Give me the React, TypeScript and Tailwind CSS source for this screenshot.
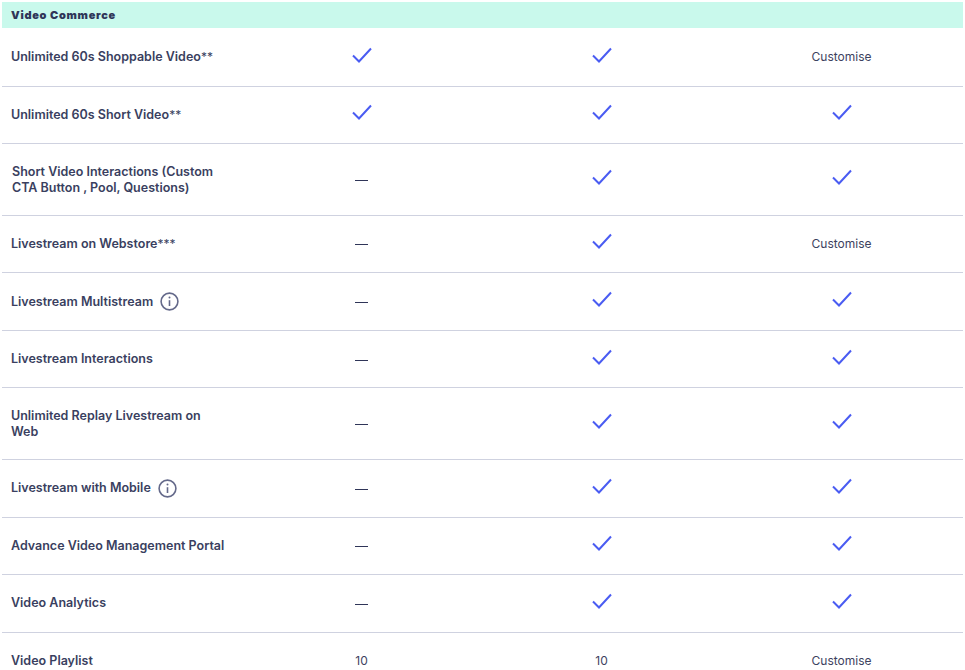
const font = "font-['Inter','Liberation_Sans',sans-serif]";

type Cell = 'check' | 'dash' | string;

const rows: { label: string; stars?: string; cells: Cell[]; tall?: boolean; info?: boolean; nudge?: boolean }[] = [
  { label: 'Unlimited 60s Shoppable Video', stars: '**', cells: ['check', 'check', 'Customise'] },
  { label: 'Unlimited 60s Short Video', stars: '**', cells: ['check', 'check', 'check'] },
  { label: 'Short Video Interactions (Custom CTA Button , Pool, Questions)', cells: ['dash', 'check', 'check'], tall: true, nudge: true },
  { label: 'Livestream on Webstore', stars: '***', cells: ['dash', 'check', 'Customise'] },
  { label: 'Livestream Multistream', cells: ['dash', 'check', 'check'], info: true },
  { label: 'Livestream Interactions', cells: ['dash', 'check', 'check'] },
  { label: 'Unlimited Replay Livestream on Web', cells: ['dash', 'check', 'check'], tall: true },
  { label: 'Livestream with Mobile', cells: ['dash', 'check', 'check'], info: true },
  { label: 'Advance Video Management Portal', cells: ['dash', 'check', 'check'] },
  { label: 'Video Analytics', cells: ['dash', 'check', 'check'] },
  { label: 'Video Playlist', cells: ['10', '10', 'Customise'] },
];

function Check() {
  return (
    <svg width="20" height="16" viewBox="0 0 20 16" fill="none" className="-mt-[5px]">
      <path d="M1 8.5 L7 14.5 L19 1.5" stroke="#4a5cf2" strokeWidth="2" />
    </svg>
  );
}

function Info() {
  return (
    <svg width="19" height="19" viewBox="0 0 19 19" fill="none" className="ml-[7px] shrink-0">
      <circle cx="9.5" cy="9.5" r="8.4" stroke="#64698a" strokeWidth="1.6" />
      <path d="M9.5 8.2 V14" stroke="#64698a" strokeWidth="1.6" />
      <circle cx="9.5" cy="5.6" r="1" fill="#64698a" />
    </svg>
  );
}

function Value({ cell }: { cell: Cell }) {
  if (cell === 'check') return <Check />;
  if (cell === 'dash') return <span className="block w-[13px] h-px mt-[2px] bg-[#2f3558]" />;
  return <span className="text-xs leading-4 text-[#3d4260]">{cell}</span>;
}

export default function App() {
  return (
    <div className={`${font} w-[965px] h-[670px] overflow-hidden bg-white pt-[2px] pl-[2px] pr-[2px]`}>
      <div className="h-[26px] mb-px bg-[#c9f9ec] pl-[9px] flex items-center">
        <span className="text-[11px] font-black tracking-[0.7px] text-[#2f3558]">Video Commerce</span>
      </div>
      {rows.map((row) => (
        <div
          key={row.label}
          className={`grid grid-cols-[239.5px_240px_240px_240px] items-center border-b border-[#cfd2e0] ${row.tall ? 'h-[71.5px]' : 'h-[57.6px]'}`}
        >
          <div className={`flex items-center ${row.nudge ? 'pl-[10px] pt-[2px]' : 'pl-[9px]'}`}>
            <span className="max-w-[218px] text-[12.5px] leading-4 font-semibold text-[#3a3f60]">
              {row.label}
              {row.stars && <span className="font-normal text-[12px]">{row.stars}</span>}
            </span>
            {row.info && <Info />}
          </div>
          {row.cells.map((cell, i) => (
            <div key={i} className="flex justify-center items-center">
              <Value cell={cell} />
            </div>
          ))}
        </div>
      ))}
    </div>
  );
}
